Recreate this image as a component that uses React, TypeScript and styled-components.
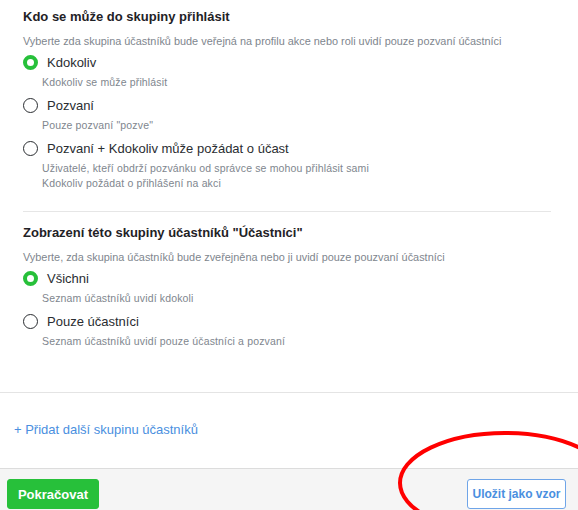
import React from "react";
import styled, { createGlobalStyle } from "styled-components";

const GlobalStyle = createGlobalStyle`
  html, body {
    margin: 0;
    padding: 0;
    background: #fff;
  }
  body {
    font-family: "Liberation Sans", Arial, sans-serif;
    color: #222;
  }
`;

type Option = {
  label: string;
  hint: string[];
  checked?: boolean;
};

type Group = {
  title: string;
  description: string;
  options: Option[];
};

const groups: Group[] = [
  {
    title: "Kdo se může do skupiny přihlásit",
    description:
      "Vyberte zda skupina účastníků bude veřejná na profilu akce nebo roli uvidí pouze pozvaní účastníci",
    options: [
      { label: "Kdokoliv", hint: ["Kdokoliv se může přihlásit"], checked: true },
      { label: "Pozvaní", hint: ['Pouze pozvaní "pozve"'] },
      {
        label: "Pozvaní + Kdokoliv může požádat o účast",
        hint: [
          "Uživatelé, kteří obdrží pozvánku od správce se mohou přihlásit sami",
          "Kdokoliv požádat o přihlášení na akci",
        ],
      },
    ],
  },
  {
    title: 'Zobrazení této skupiny účastníků "Účastníci"',
    description:
      "Vyberte, zda skupina účastníků bude zveřejněna nebo ji uvidí pouze pouzvaní účastníci",
    options: [
      { label: "Všichni", hint: ["Seznam účastníků uvidí kdokoli"], checked: true },
      { label: "Pouze účastníci", hint: ["Seznam účastníků uvidí pouze účastníci a pozvaní"] },
    ],
  },
];

const Page = styled.div`
  position: relative;
  width: 578px;
  height: 510px;
  overflow: hidden;
`;

const Content = styled.div`
  padding: 7px 27px 43px 23px;
  border-bottom: 1px solid #e4e4e4;
`;

const Section = styled.section`
  display: flex;
  flex-direction: column;
`;

const Title = styled.h3`
  margin: 0;
  font-size: 13px;
  line-height: 20px;
  font-weight: 700;
  color: #1f2226;
`;

const Description = styled.p`
  margin: 6px 0 3px;
  font-size: 10.9px;
  line-height: 16px;
  color: #80868e;
`;

const OptionRow = styled.label`
  display: flex;
  align-items: center;
  gap: 9px;
  height: 20px;
  margin-top: 5px;
  font-size: 13px;
  color: #2a2d31;

  &:first-of-type {
    margin-top: 0;
  }
`;

const Radio = styled.span<{ $checked?: boolean }>`
  box-sizing: border-box;
  width: 15px;
  height: 15px;
  border-radius: 50%;
  flex: none;
  background: #fff;
  border: ${(p) => (p.$checked ? "4.5px solid #27c03a" : "1.5px solid #2a2d31")};
`;

const Hint = styled.div`
  margin: 3px 0 0 19px;
  font-size: 10.5px;
  line-height: 15px;
  letter-spacing: 0.15px;
  color: #80868e;
`;

const Divider = styled.hr`
  border: none;
  border-top: 1px solid #e6e6e6;
  margin: 20px 0 11px;
`;

const AddRow = styled.div`
  padding: 27px 14px 29px;
`;

const AddLink = styled.a`
  font-size: 13px;
  line-height: 18px;
  color: #4a8fe0;
  text-decoration: none;
  cursor: pointer;
`;

const Footer = styled.footer`
  display: flex;
  justify-content: space-between;
  align-items: flex-start;
  background: #f5f5f5;
  border-top: 1px solid #dcdcdc;
  padding: 10px 12px 20px 7px;
`;

const Button = styled.button<{ $outline?: boolean }>`
  width: ${(p) => (p.$outline ? "99px" : "92px")};
  height: 30px;
  padding: 0;
  border-radius: 3px;
  font-family: inherit;
  font-weight: 700;
  font-size: ${(p) => (p.$outline ? "12px" : "13px")};
  cursor: pointer;
  background: ${(p) => (p.$outline ? "#fff" : "#27c03a")};
  color: ${(p) => (p.$outline ? "#4a8fe0" : "#fff")};
  border: 1px solid ${(p) => (p.$outline ? "#6fa5e8" : "#27c03a")};
`;

const Annotation = styled.svg`
  position: absolute;
  left: 0;
  top: 0;
  pointer-events: none;
`;

export default function App() {
  return (
    <Page>
      <GlobalStyle />
      <Content>
        {groups.map((g, gi) => (
          <React.Fragment key={g.title}>
            {gi > 0 && <Divider />}
            <Section>
              <Title>{g.title}</Title>
              <Description>{g.description}</Description>
              {g.options.map((o) => (
                <React.Fragment key={o.label}>
                  <OptionRow>
                    <Radio $checked={o.checked} />
                    {o.label}
                  </OptionRow>
                  <Hint>
                    {o.hint.map((h) => (
                      <div key={h}>{h}</div>
                    ))}
                  </Hint>
                </React.Fragment>
              ))}
            </Section>
          </React.Fragment>
        ))}
      </Content>
      <AddRow>
        <AddLink>+ Přidat další skupinu účastníků</AddLink>
      </AddRow>
      <Footer>
        <Button>Pokračovat</Button>
        <Button $outline>Uložit jako vzor</Button>
      </Footer>
      <Annotation width="578" height="510" viewBox="0 0 578 510">
        <ellipse
          cx="505"
          cy="483"
          rx="105"
          ry="50"
          fill="none"
          stroke="#f00"
          strokeWidth="4"
        />
      </Annotation>
    </Page>
  );
}
